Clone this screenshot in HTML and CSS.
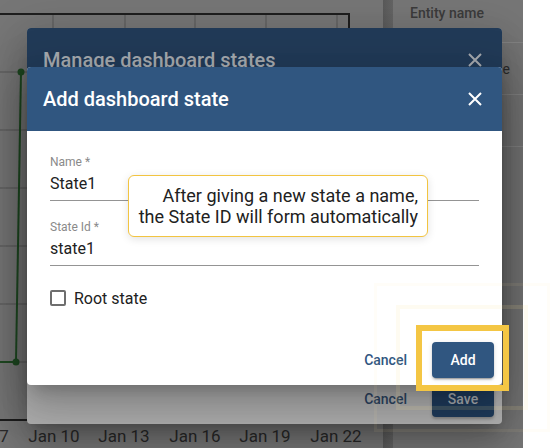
FILE: index.html
```html
<!DOCTYPE html>
<html lang="en">
<head>
<meta charset="utf-8">
<title>Add dashboard state</title>
<link rel="stylesheet" href="styles.css">
</head>
<body>
<div class="screen">
  <div class="app">
    <div class="dashboard">
      <div class="chart-panel">
        <svg class="chart" width="383" height="448" viewBox="0 0 383 448">
          <g class="grid">
            <line x1="0" y1="72" x2="349" y2="72"/>
            <line x1="0" y1="130" x2="349" y2="130"/>
            <line x1="0" y1="188" x2="349" y2="188"/>
            <line x1="0" y1="246" x2="349" y2="246"/>
            <line x1="0" y1="304" x2="349" y2="304"/>
            <line x1="0" y1="362" x2="349" y2="362"/>
            <line x1="53" y1="14" x2="53" y2="420"/>
            <line x1="125" y1="14" x2="125" y2="420"/>
            <line x1="195" y1="14" x2="195" y2="420"/>
            <line x1="266" y1="14" x2="266" y2="420"/>
            <line x1="337" y1="14" x2="337" y2="420"/>
          </g>
          <g class="frame">
            <line x1="0" y1="14" x2="350" y2="14"/>
            <line x1="349" y1="14" x2="349" y2="421"/>
            <line x1="0" y1="420" x2="350" y2="420"/>
          </g>
          <g class="series">
            <line x1="21" y1="72" x2="16" y2="362"/>
            <line x1="0" y1="362" x2="16" y2="362"/>
            <circle cx="21" cy="72" r="3.5"/>
            <circle cx="16" cy="362" r="3.5"/>
          </g>
          <g class="axis-labels">
            <text x="4" y="442">7</text>
            <text x="54" y="442">Jan 10</text>
            <text x="124" y="442">Jan 13</text>
            <text x="195" y="442">Jan 16</text>
            <text x="265" y="442">Jan 19</text>
            <text x="336" y="442">Jan 22</text>
          </g>
        </svg>
      </div>
      <div class="divider"></div>
      <div class="side-panel">
        <div class="side-head">Entity name</div>
        <div class="side-row">Device</div>
        <div class="side-row"></div>
      </div>
    </div>

    <div class="dialog dialog-back">
      <div class="dialog-header">
        <span class="dialog-title">Manage dashboard states</span>
        <svg class="close" width="14" height="14" viewBox="0 0 14 14"><path d="M1 1L13 13M13 1L1 13"/></svg>
      </div>
      <div class="dialog-body"></div>
      <div class="dialog-actions">
        <span class="btn-text">Cancel</span>
        <span class="btn-primary">Save</span>
      </div>
    </div>

    <div class="dialog dialog-front">
      <div class="dialog-header">
        <span class="dialog-title">Add dashboard state</span>
        <svg class="close" width="14" height="14" viewBox="0 0 14 14"><path d="M1 1L13 13M13 1L1 13"/></svg>
      </div>
      <div class="dialog-body form">
        <div class="field">
          <div class="field-label">Name *</div>
          <div class="field-value">State1</div>
        </div>
        <div class="field">
          <div class="field-label">State Id *</div>
          <div class="field-value">state1</div>
        </div>
        <label class="check-row">
          <span class="checkbox"></span>
          <span class="check-label">Root state</span>
        </label>
      </div>
      <div class="dialog-actions">
        <span class="btn-text">Cancel</span>
        <span class="btn-primary">Add</span>
      </div>
    </div>
  </div>
  <div class="page-edge"></div>

  <div class="tour-ring ring-outer"></div>
  <div class="tour-ring ring-inner"></div>
  <div class="tour-focus"></div>
  <div class="tour-tip">After giving a new state a name,<br>the State ID will form automatically</div>
</div>
</body>
</html>
```

FILE: styles.css
```css
* { box-sizing: border-box; }
html, body { margin: 0; padding: 0; }
body {
  width: 551px;
  height: 448px;
  overflow: hidden;
  background: #ffffff;
  font-family: Roboto, "Liberation Sans", sans-serif;
}
.screen {
  position: relative;
  width: 551px;
  height: 448px;
  display: flex;
}
.app {
  position: relative;
  width: 523px;
  height: 448px;
  background: #767676;
  overflow: hidden;
}
.page-edge {
  flex: 1;
  background: #ffffff;
}
.dashboard {
  display: flex;
  height: 100%;
}
.chart-panel {
  width: 383px;
  height: 448px;
}
.chart { display: block; }
.grid line { stroke: #575757; stroke-width: 1; }
.frame line { stroke: #1e1e1e; stroke-width: 2; }
.series line { stroke: #1f4a22; stroke-width: 2; }
.series circle { fill: #1f4a22; }
.axis-labels text {
  font-family: Roboto, "Liberation Sans", sans-serif;
  font-size: 17px;
  fill: #2a2a2a;
  text-anchor: middle;
}
.divider {
  width: 10px;
  background: linear-gradient(90deg, #5a5a5a, #646464);
}
.side-panel {
  width: 130px;
  display: flex;
  flex-direction: column;
}
.side-head {
  height: 43px;
  padding: 5px 0 0 17px;
  font-size: 14px;
  font-weight: 500;
  color: #3b3b3b;
  border-bottom: 1px solid #858585;
}
.side-row {
  height: 52px;
  display: flex;
  align-items: center;
  justify-content: flex-end;
  padding-right: 13px;
  font-size: 14px;
  color: #2e2e2e;
  border-bottom: 1px solid #858585;
}

.dialog {
  position: absolute;
  left: 27px;
  width: 475px;
  border-radius: 4px;
  overflow: hidden;
  display: flex;
  flex-direction: column;
  box-shadow: 0 11px 15px -7px rgba(0,0,0,.2), 0 24px 38px 3px rgba(0,0,0,.14), 0 9px 46px 8px rgba(0,0,0,.12);
}
.dialog-back {
  top: 28px;
  height: 396px;
  background: #adadad;
}
.dialog-front {
  top: 67px;
  height: 318px;
  background: #ffffff;
}
.dialog-header {
  height: 64px;
  flex: none;
  display: flex;
  align-items: center;
  justify-content: space-between;
  padding: 0 20px 0 16px;
}
.dialog-title {
  font-size: 20px;
  font-weight: 500;
}
.close path { fill: none; stroke-width: 2; }
.dialog-back .dialog-header { background: #213a57; }
.dialog-back .dialog-title { color: #a5a9ae; }
.dialog-back .close path { stroke: #a5a9ae; }
.dialog-front .dialog-header { background: #305680; }
.dialog-front .dialog-title { color: #ffffff; }
.dialog-front .close path { stroke: #ffffff; }

.dialog-body { flex: 1; }
.form { padding: 24px 23px 0 23px; }
.field {
  border-bottom: 1px solid #949494;
  padding-bottom: 6px;
  margin-bottom: 19px;
}
.field-label {
  font-size: 12px;
  line-height: 14px;
  color: #8a8a8a;
}
.field-value {
  margin-top: 5px;
  font-size: 16px;
  line-height: 20px;
  color: #212121;
}
.check-row {
  display: flex;
  align-items: center;
  gap: 8px;
  margin-top: 24px;
  height: 16px;
}
.checkbox {
  width: 16px;
  height: 16px;
  border: 2px solid #6e6e6e;
  border-radius: 2px;
}
.check-label {
  font-size: 16px;
  color: #212121;
}

.dialog-actions {
  flex: none;
  display: flex;
  justify-content: flex-end;
  align-items: center;
  gap: 9px;
  padding: 0 8px 7px 0;
}
.btn-text {
  height: 36px;
  line-height: 36px;
  padding: 0 16px;
  font-size: 14px;
  font-weight: 500;
}
.btn-primary {
  width: 62px;
  height: 36px;
  line-height: 36px;
  text-align: center;
  border-radius: 4px;
  font-size: 14px;
  font-weight: 500;
}
.dialog-back .btn-text { color: #2c4360; }
.dialog-back .btn-primary { background: #1e3a5a; color: #a5a9ae; box-shadow: 0 2px 3px rgba(0,0,0,.25); }
.dialog-front .btn-text { color: #305680; }
.dialog-front .btn-primary { background: #305680; color: #ffffff; box-shadow: 0 3px 1px -2px rgba(0,0,0,.2), 0 2px 2px 0 rgba(0,0,0,.14), 0 1px 5px 0 rgba(0,0,0,.12); }

.tour-ring {
  position: absolute;
  border-style: solid;
  pointer-events: none;
}
.ring-outer {
  left: 374px;
  top: 283px;
  width: 176px;
  height: 149px;
  border-width: 3px;
  border-color: rgba(250, 225, 150, 0.07);
}
.ring-inner {
  left: 396px;
  top: 305px;
  width: 132px;
  height: 105px;
  border-width: 4px;
  border-color: rgba(250, 225, 150, 0.13);
}
.tour-focus {
  position: absolute;
  left: 416px;
  top: 325px;
  width: 93px;
  height: 66px;
  border: 6px solid #f4c644;
}
.tour-tip {
  position: absolute;
  left: 128px;
  top: 175px;
  width: 300px;
  height: 62px;
  padding: 9px 9px;
  background: #ffffff;
  border: 1px solid #f2c441;
  border-radius: 6px;
  box-shadow: 0 2px 8px rgba(0,0,0,.12);
  text-align: right;
  font-size: 18px;
  line-height: 21px;
  color: #212121;
}
```
